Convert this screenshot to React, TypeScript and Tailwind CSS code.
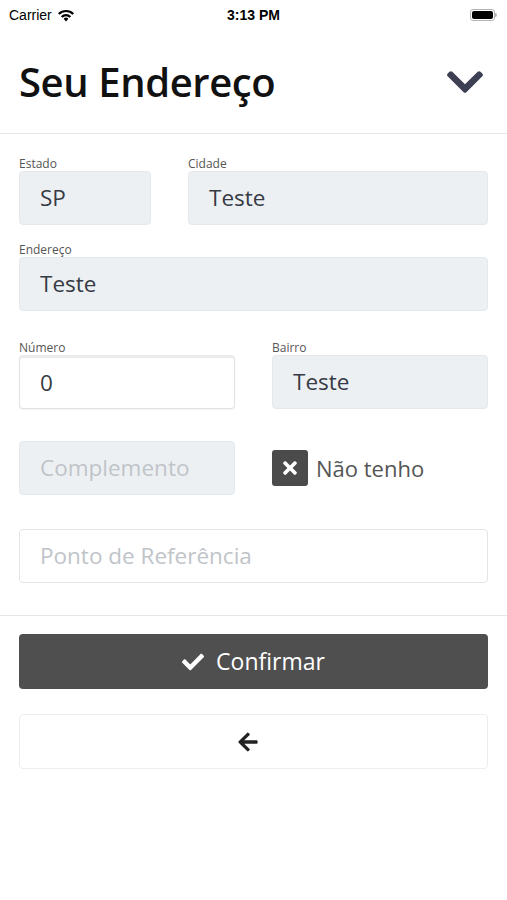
import React from "react";
import { FaChevronDown, FaTimes, FaCheck, FaArrowLeft } from "react-icons/fa";

const FONT = { fontFamily: '"Open Sans", "Noto Sans", sans-serif' };

/** Label + input field pair */
function Field({
  label,
  value,
  placeholder,
  filled = true,
  className,
}: {
  label?: string;
  value?: string;
  placeholder?: string;
  filled?: boolean;
  className?: string;
}) {
  return (
    <div className={className}>
      {label && <div className="text-[12px] leading-[14px] text-[#555] h-[14px]">{label}</div>}
      <div
        className={
          filled
            ? "h-[54px] rounded-[4px] bg-[#edf0f2] border border-[#e6e9ec] flex items-center px-[20px]"
            : "h-[54px] rounded-[4px] bg-white border border-[#e3e5e8] flex items-center px-[20px]"
        }
      >
        <span className={value ? "text-[22.5px] text-[#363b45]" : "text-[22.5px] text-[#bfc4c9]"}>
          {value ?? placeholder}
        </span>
      </div>
    </div>
  );
}

function StatusBar() {
  return (
    <div className="h-[30px] flex items-center justify-between px-[9px] text-[14px] text-black" style={{ fontFamily: '"Liberation Sans", sans-serif' }}>
      <div className="flex items-center gap-[5px] w-[120px]">
        <span>Carrier</span>
        <svg width="18" height="13" viewBox="0 0 18 13">
          <path d="M9 12.5 L6.6 9.8 A3.4 3.4 0 0 1 11.4 9.8 Z" fill="#000" />
          <path d="M3.9 7.2 A7.2 7.2 0 0 1 14.1 7.2 L12.6 8.7 A5 5 0 0 0 5.4 8.7 Z" fill="#000" />
          <path d="M1 4.3 A11.3 11.3 0 0 1 17 4.3 L15.5 5.8 A9.2 9.2 0 0 0 2.5 5.8 Z" fill="#000" />
        </svg>
      </div>
      <span className="font-semibold">3:13 PM</span>
      <div className="w-[120px] flex justify-end pr-[1px]">
        <div className="flex items-center">
          <div className="w-[25px] h-[12px] rounded-[3px] border border-[#b5b5b5] p-[1px]">
            <div className="w-full h-full rounded-[2px] bg-black" />
          </div>
          <div className="w-[2px] h-[4px] bg-[#b5b5b5] rounded-r-sm" />
        </div>
      </div>
    </div>
  );
}

export default function App() {
  return (
    <div className="w-[507px] h-[900px] bg-white" style={FONT}>
      <StatusBar />

      <div className="flex items-center justify-between pl-[19px] pr-[20px] h-[104px] border-b border-[#e6e6e6]">
        <h1 className="text-[40px] font-semibold text-[#111] tracking-[-0.4px]">Seu Endereço</h1>
        <FaChevronDown className="text-[#3d3f52] w-[42px] h-[42px] mr-[1px]" />
      </div>

      <div className="px-[19px] pt-[23px] pb-[32px] border-b border-[#e6e6e6]">
        <div className="flex gap-[37px]">
          <Field className="w-[132px]" label="Estado" value="SP" />
          <Field className="flex-1" label="Cidade" value="Teste" />
        </div>

        <Field className="mt-[18px]" label="Endereço" value="Teste" />

        <div className="flex gap-[37px] mt-[30px]">
          <div className="flex-1">
            <div className="text-[12px] leading-[14px] text-[#555] h-[14px]">Número</div>
            <div className="h-[54px] rounded-[4px] bg-white border border-[#dfe2e5] border-t-[3px] border-t-[#e9ebed] flex items-center px-[20px] shadow-[0_1px_1px_rgba(0,0,0,0.04)]">
              <span className="text-[22.5px] text-[#363b45]">0</span>
            </div>
          </div>
          <Field className="flex-1" label="Bairro" value="Teste" />
        </div>

        <div className="flex gap-[37px] mt-[32px]">
          <Field className="flex-1" placeholder="Complemento" />
          <div className="flex-1 flex items-center gap-[8px]">
            <div className="w-[36px] h-[36px] rounded-[3px] bg-[#4b4b4b] flex items-center justify-center">
              <FaTimes className="text-white w-[20px] h-[20px]" />
            </div>
            <span className="text-[22px] text-[#555]">Não tenho</span>
          </div>
        </div>

        <Field className="mt-[34px]" placeholder="Ponto de Referência" filled={false} />
      </div>

      <div className="px-[19px] pt-[18px]">
        <button className="w-full h-[55px] rounded-[4px] bg-[#4f4f4f] flex items-center justify-center gap-[12px] text-white">
          <FaCheck className="w-[22px] h-[22px]" />
          <span className="text-[23px]">Confirmar</span>
        </button>
        <button className="mt-[25px] w-full h-[55px] rounded-[4px] bg-white border border-[#ebedf0] flex items-center justify-center text-[#222]">
          <FaArrowLeft className="w-[22px] h-[22px] mr-[12px]" />
        </button>
      </div>
    </div>
  );
}
